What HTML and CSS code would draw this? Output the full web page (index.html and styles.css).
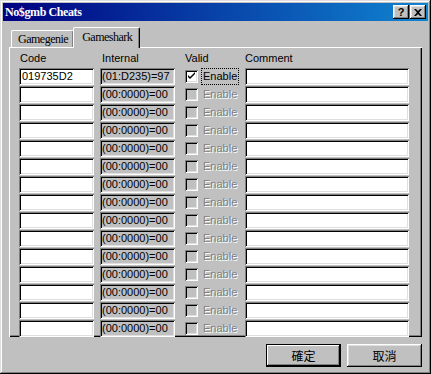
FILE: index.html
```html
<!DOCTYPE html>
<html lang="zh-Hant">
<head>
  <meta charset="UTF-8" />
  <title>No$gmb Cheats</title>
  <link rel="stylesheet" href="styles.css">
</head>
<body>
  <div class="window">
    <div class="titlebar">
      <span class="title">No$gmb Cheats</span>
      <div class="title-btns">
        <span class="tbtn help">?</span>
        <span class="tbtn close">
          <svg width="8" height="7" viewBox="0 0 8 7"><path d="M0 0h2l2 2 2-2h2L5 3.5 8 7H6L4 5 2 7H0l3-3.5z" fill="#000"/></svg>
        </span>
      </div>
    </div>

    <div class="tabs">
      <div class="tab">Gamegenie</div>
      <div class="tab active">Gameshark</div>
    </div>

    <div class="panel">
      <div class="grid head">
        <span class="lbl">Code</span>
        <span class="lbl lbl-int">Internal</span>
        <span class="lbl">Valid</span>
        <span class="lbl lbl-com">Comment</span>
      </div>

      <div class="rows">
        <div class="grid row">
          <div class="field">019735D2</div>
          <div class="field ro">(01:D235)=97</div>
          <div class="valid"><span class="chk on"><svg width="9" height="9" viewBox="0 0 9 9"><path d="M1 3v2l2 2 5-5V0L3 5z" fill="#000"/></svg></span><span class="en focus">Enable</span></div>
          <div class="field"></div>
        </div>
        <div class="grid row"><div class="field"></div><div class="field ro">(00:0000)=00</div><div class="valid"><span class="chk"></span><span class="en off">Enable</span></div><div class="field"></div></div>
        <div class="grid row"><div class="field"></div><div class="field ro">(00:0000)=00</div><div class="valid"><span class="chk"></span><span class="en off">Enable</span></div><div class="field"></div></div>
        <div class="grid row"><div class="field"></div><div class="field ro">(00:0000)=00</div><div class="valid"><span class="chk"></span><span class="en off">Enable</span></div><div class="field"></div></div>
        <div class="grid row"><div class="field"></div><div class="field ro">(00:0000)=00</div><div class="valid"><span class="chk"></span><span class="en off">Enable</span></div><div class="field"></div></div>
        <div class="grid row"><div class="field"></div><div class="field ro">(00:0000)=00</div><div class="valid"><span class="chk"></span><span class="en off">Enable</span></div><div class="field"></div></div>
        <div class="grid row"><div class="field"></div><div class="field ro">(00:0000)=00</div><div class="valid"><span class="chk"></span><span class="en off">Enable</span></div><div class="field"></div></div>
        <div class="grid row"><div class="field"></div><div class="field ro">(00:0000)=00</div><div class="valid"><span class="chk"></span><span class="en off">Enable</span></div><div class="field"></div></div>
        <div class="grid row"><div class="field"></div><div class="field ro">(00:0000)=00</div><div class="valid"><span class="chk"></span><span class="en off">Enable</span></div><div class="field"></div></div>
        <div class="grid row"><div class="field"></div><div class="field ro">(00:0000)=00</div><div class="valid"><span class="chk"></span><span class="en off">Enable</span></div><div class="field"></div></div>
        <div class="grid row"><div class="field"></div><div class="field ro">(00:0000)=00</div><div class="valid"><span class="chk"></span><span class="en off">Enable</span></div><div class="field"></div></div>
        <div class="grid row"><div class="field"></div><div class="field ro">(00:0000)=00</div><div class="valid"><span class="chk"></span><span class="en off">Enable</span></div><div class="field"></div></div>
        <div class="grid row"><div class="field"></div><div class="field ro">(00:0000)=00</div><div class="valid"><span class="chk"></span><span class="en off">Enable</span></div><div class="field"></div></div>
        <div class="grid row"><div class="field"></div><div class="field ro">(00:0000)=00</div><div class="valid"><span class="chk"></span><span class="en off">Enable</span></div><div class="field"></div></div>
        <div class="grid row"><div class="field"></div><div class="field ro">(00:0000)=00</div><div class="valid"><span class="chk"></span><span class="en off">Enable</span></div><div class="field"></div></div>
      </div>
    </div>

    <div class="actions">
      <button class="btn default">確定</button>
      <button class="btn">取消</button>
    </div>
  </div>
</body>
</html>
```

FILE: styles.css
```css
body {
  margin: 0;
  background: #c0c0c0;
  font-family: 'Liberation Sans', Arial, sans-serif;
  font-size: 11px;
  color: #000;
}

.window {
  width: 431px;
  height: 374px;
  box-sizing: border-box;
  padding: 3px;
  background: #c0c0c0;
  box-shadow: inset -1px -1px #000, inset 1px 1px #dfdfdf, inset -2px -2px #808080, inset 2px 2px #fff;
  display: flex;
  flex-direction: column;
}

/* title bar */
.titlebar {
  height: 18px;
  background: linear-gradient(to right, #000080, #1084d0);
  display: flex;
  align-items: center;
  justify-content: space-between;
  padding: 0 2px 0 2px;
}

.title {
  color: #fff;
  font-family: 'Liberation Serif', 'Times New Roman', serif;
  font-weight: bold;
  font-size: 12px;
  letter-spacing: -0.4px;
}

.title-btns {
  display: flex;
  gap: 1px;
}

.tbtn {
  width: 16px;
  height: 14px;
  box-sizing: border-box;
  background: #c0c0c0;
  box-shadow: inset -1px -1px #000, inset 1px 1px #fff, inset -2px -2px #808080, inset 2px 2px #dfdfdf;
  display: flex;
  align-items: center;
  justify-content: center;
  font-weight: bold;
  font-size: 11px;
  line-height: 1;
}

/* tabs */
.tabs {
  display: flex;
  align-items: flex-end;
  margin: 6px 0 0 6px;
  height: 20px;
  position: relative;
  z-index: 1;
}

.tab {
  height: 17px;
  box-sizing: border-box;
  margin-left: 2px;
  padding: 1px 5px 0 6px;
  font-family: 'Liberation Serif', 'Times New Roman', serif;
  font-size: 12px;
  letter-spacing: -0.5px;
  line-height: 15px;
  background: #c0c0c0;
  border-top: 1px solid #fff;
  border-left: 1px solid #fff;
  border-right: 1px solid #000;
  border-radius: 2px 2px 0 0;
  box-shadow: inset -1px 0 #808080;
}

.tab.active {
  height: 21px;
  margin: 0 0 -1px -1px;
  padding: 2px 7px 0 8px;
  line-height: 15px;
}

/* panel */
.panel {
  margin-left: 6px;
  width: 413px;
  height: 290px;
  box-sizing: border-box;
  padding: 2px 0 0 10px;
  overflow: hidden;
  box-shadow: inset 1px 1px #fff, inset -1px -1px #000, inset -2px -2px #808080;
}

.grid {
  display: grid;
  grid-template-columns: 81px 84px 61px 164px;
}

.head {
  height: 19px;
  line-height: 13px;
  padding-top: 3px;
  box-sizing: border-box;
}

.lbl { padding-left: 1px; }
.lbl-int { padding-left: 2px; }
.lbl-com { padding-left: 0; }

.row {
  height: 18px;
}

.field {
  width: 75px;
  height: 17px;
  box-sizing: border-box;
  padding: 2px 0 0 3px;
  line-height: 13px;
  background: #fff;
  box-shadow: inset 1px 1px #808080, inset -1px -1px #fff, inset 2px 2px #000, inset -2px -2px #dfdfdf;
  white-space: nowrap;
  overflow: hidden;
}

.row .field:last-child {
  width: 164px;
}

.field.ro {
  background: #c0c0c0;
  padding-left: 2px;
}

.valid {
  display: flex;
  align-items: center;
  height: 17px;
}

.chk {
  width: 13px;
  height: 13px;
  margin-left: 1px;
  box-sizing: border-box;
  background: #c0c0c0;
  box-shadow: inset 1px 1px #808080, inset -1px -1px #fff, inset 2px 2px #000, inset -2px -2px #dfdfdf;
  display: flex;
  align-items: center;
  justify-content: center;
}

.chk.on {
  background: #fff;
}

.en {
  margin-left: 3px;
  padding: 1px 1px;
  line-height: 13px;
  border: 1px solid transparent;
}

.en.focus {
  border: 1px dotted #000;
}

.en.off {
  color: #808080;
  text-shadow: 1px 1px #fff;
}

/* buttons */
.actions {
  display: flex;
  justify-content: flex-end;
  gap: 6px;
  margin: 7px 6px 0 0;
}

.btn {
  width: 75px;
  height: 23px;
  box-sizing: border-box;
  background: #c0c0c0;
  border: none;
  padding: 0;
  font-family: 'Noto Sans CJK TC', sans-serif;
  font-size: 12px;
  color: #000;
  box-shadow: inset -1px -1px #000, inset 1px 1px #fff, inset -2px -2px #808080, inset 2px 2px #dfdfdf;
}

.btn.default {
  border: 1px solid #000;
  box-shadow: inset -1px -1px #000, inset 1px 1px #fff, inset -2px -2px #808080;
}
```
